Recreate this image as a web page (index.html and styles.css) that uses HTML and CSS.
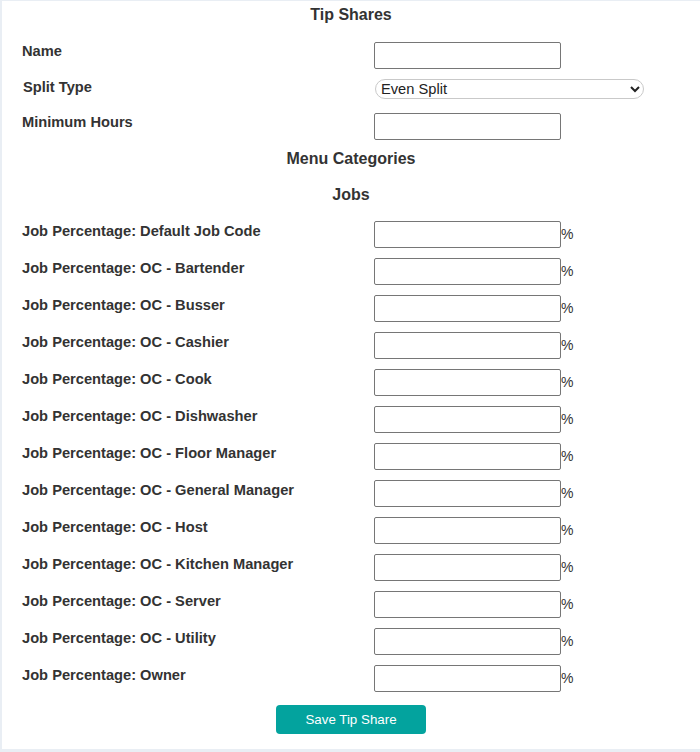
FILE: index.html
```html
<!DOCTYPE html>
<html>
<head>
<meta charset="utf-8">
<link rel="stylesheet" href="styles.css">
</head>
<body>
<div class="page">
  <h2 class="title">Tip Shares</h2>

  <div class="row row-name">
    <label class="label">Name</label>
    <div class="field"><input class="text-input" type="text"></div>
  </div>
  <div class="row row-split">
    <label class="label">Split Type</label>
    <div class="field"><select class="select"><option>Even Split</option></select></div>
  </div>
  <div class="row row-hours">
    <label class="label">Minimum Hours</label>
    <div class="field"><input class="text-input" type="text"></div>
  </div>

  <h3 class="section section-menu">Menu Categories</h3>
  <h3 class="section section-jobs">Jobs</h3>

  <div class="jobs">
    <div class="row job"><label class="label">Job Percentage: Default Job Code</label><div class="field"><input class="text-input" type="text">%</div></div>
    <div class="row job"><label class="label">Job Percentage: OC - Bartender</label><div class="field"><input class="text-input" type="text">%</div></div>
    <div class="row job"><label class="label">Job Percentage: OC - Busser</label><div class="field"><input class="text-input" type="text">%</div></div>
    <div class="row job"><label class="label">Job Percentage: OC - Cashier</label><div class="field"><input class="text-input" type="text">%</div></div>
    <div class="row job"><label class="label">Job Percentage: OC - Cook</label><div class="field"><input class="text-input" type="text">%</div></div>
    <div class="row job"><label class="label">Job Percentage: OC - Dishwasher</label><div class="field"><input class="text-input" type="text">%</div></div>
    <div class="row job"><label class="label">Job Percentage: OC - Floor Manager</label><div class="field"><input class="text-input" type="text">%</div></div>
    <div class="row job"><label class="label">Job Percentage: OC - General Manager</label><div class="field"><input class="text-input" type="text">%</div></div>
    <div class="row job"><label class="label">Job Percentage: OC - Host</label><div class="field"><input class="text-input" type="text">%</div></div>
    <div class="row job"><label class="label">Job Percentage: OC - Kitchen Manager</label><div class="field"><input class="text-input" type="text">%</div></div>
    <div class="row job"><label class="label">Job Percentage: OC - Server</label><div class="field"><input class="text-input" type="text">%</div></div>
    <div class="row job"><label class="label">Job Percentage: OC - Utility</label><div class="field"><input class="text-input" type="text">%</div></div>
    <div class="row job"><label class="label">Job Percentage: Owner</label><div class="field"><input class="text-input" type="text">%</div></div>
  </div>

  <div class="actions">
    <button class="save-btn" type="button">Save Tip Share</button>
  </div>
</div>
</body>
</html>
```

FILE: styles.css
```css
html, body {
  margin: 0;
  padding: 0;
}
body {
  background: #e9eef4;
  font-family: "Liberation Sans", Arial, sans-serif;
  color: #333;
  height: 752px;
  overflow: hidden;
}
.page {
  margin: 1px 0 0 2px;
  background: #fff;
  height: 748px;
  padding-top: 5px;
  box-sizing: border-box;
}
.title, .section {
  margin: 0;
  font-size: 16px;
  font-weight: bold;
  line-height: 18px;
  text-align: center;
  color: #333;
}
.row {
  display: flex;
  align-items: flex-start;
  height: 27px;
  padding-left: 20px;
}
.label {
  width: 352px;
  flex: none;
  font-size: 14.67px;
  font-weight: bold;
  line-height: 17px;
  margin-top: 1px;
}
.job .label { margin-top: 2px; }
.field {
  font-size: 14px;
  line-height: 27px;
  white-space: nowrap;
}
.text-input {
  width: 187px;
  height: 27px;
  box-sizing: border-box;
  border: 1px solid #767676;
  border-radius: 2px;
  padding: 1px 2px;
  margin: 0;
  font-family: "Liberation Sans", Arial, sans-serif;
  font-size: 13.33px;
  vertical-align: baseline;
}
.row-name { margin-top: 18px; }
.row-split { margin-top: 10px; height: 20px; }
.row-split .label { padding-left: 1px; margin-top: 0; }
.row-hours { margin-top: 14px; }
.select {
  width: 269px;
  height: 20px;
  box-sizing: border-box;
  border: 1px solid #c9c9c9;
  border-radius: 10px;
  background: #fff;
  font-family: "Liberation Sans", Arial, sans-serif;
  font-size: 14.67px;
  color: #222;
  padding: 0 0 0 1px;
  margin: 0;
  vertical-align: top;
}
.row-split .field { line-height: 20px; }
.section-menu { margin-top: 10px; }
.section-jobs { margin-top: 18px; }
.jobs {
  margin-top: 17px;
  display: flex;
  flex-direction: column;
  gap: 10px;
}
.actions {
  margin-top: 13px;
  display: flex;
  justify-content: center;
}
.save-btn {
  width: 150px;
  height: 29px;
  border: none;
  border-radius: 4px;
  background: #03a39e;
  color: #fff;
  font-family: "Liberation Sans", Arial, sans-serif;
  font-size: 13.33px;
  padding: 0;
}
```
